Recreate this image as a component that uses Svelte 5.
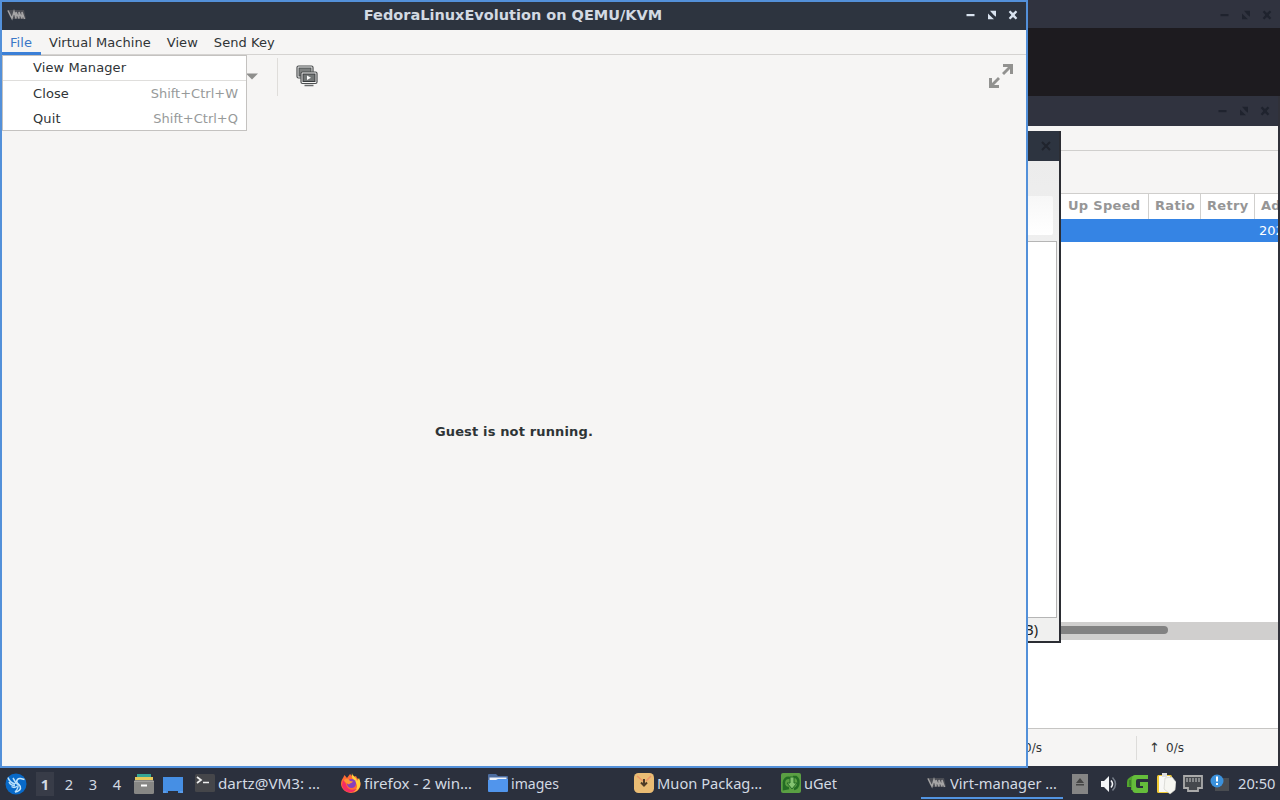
<script lang="ts">
	const menus = ['File', 'Virtual Machine', 'View', 'Send Key'];
	const columns = [
		{ label: 'Up Speed', width: 88 },
		{ label: 'Ratio', width: 52 },
		{ label: 'Retry', width: 54 },
		{ label: 'Added On', width: 90 }
	];
	const desktops = [1, 2, 3, 4];
	const tasks = [
		{ icon: 'terminal', label: 'dartz@VM3: …', width: 102 },
		{ icon: 'firefox', label: 'firefox - 2 win…', width: 108 },
		{ icon: 'folder', label: 'images', width: 48 },
		{ icon: 'muon', label: 'Muon Packag…', width: 105 },
		{ icon: 'uget', label: 'uGet', width: 33 },
		{ icon: 'virt', label: 'Virt-manager …', width: 107, active: true }
	];
</script>

{#snippet buttons()}
	<svg class="buttons" width="54" height="12" viewBox="0 0 54 12" fill="currentColor">
		<path d="M2.500 5h8v2.200h-8z" />
		<path d="M26 1.800h6v6l-2-1.600-2.500-2.600zM24 4.500l2.500 2.500L30 10.300h-6z" />
		<path d="M44.700 3l1.600-1.600 2.700 2.700 2.700-2.700L53.300 3l-2.700 3 2.700 3-1.600 1.600L49 7.900l-2.700 2.700L44.700 9l2.700-3z" />
	</svg>
{/snippet}

{#snippet vmLogo()}
	<svg width="20" height="12" viewBox="0 0 20 12">
		<path d="M0 1h17l2 9H6L3 8z" fill="#4b4d54" />
		<path d="M1 1.500l4 8 2-7 2 7V3l3 6.500V3l3 6.500V3l2.500 7" fill="none" stroke="#a5a4a5" stroke-width="1.400" />
	</svg>
{/snippet}

<div class="desktop">
	<section class="window console">
		<header>{@render buttons()}</header>
	</section>

	<section class="window downloads">
		<header>{@render buttons()}</header>
		<div class="downloads-menu"></div>
		<div class="downloads-tools"></div>
		<div class="columns">
			{#each columns as column}
				<span style:width="{column.width}px">{column.label}</span>
			{/each}
		</div>
		<div class="selected-row"><span>2021</span></div>
		<div class="rows"></div>
		<div class="scrollbar"><i></i></div>
		<div class="summary"></div>
		<footer><span class="down">↓ 0/s</span><span class="up"><b>↑</b>0/s</span></footer>
	</section>

	<section class="window dialog">
		<header>
			<svg width="10" height="10" viewBox="0 0 10 10"><path d="M1 1l8 8M9 1L1 9" stroke="#20242d" stroke-width="2" /></svg>
		</header>
		<div class="dialog-tools"><i></i></div>
		<div class="dialog-list"></div>
		<footer>GiB)</footer>
	</section>

	<section class="window viewer">
		<header>
			<span class="logo">{@render vmLogo()}</span>
			<h1>FedoraLinuxEvolution on QEMU/KVM</h1>
			{@render buttons()}
		</header>
		<nav>
			{#each menus as menu, i}
				<span class:open={i === 0}>{menu}</span>
			{/each}
		</nav>
		<div class="toolbar">
			<svg class="arrow" width="12" height="7" viewBox="0 0 12 7"><path d="M0 .5h12L6 6.500z" fill="#8e8e8c" /></svg>
			<span class="separator"></span>
			<svg class="snapshots" width="22" height="22" viewBox="0 0 22 22">
				<rect x="1" y="1" width="16" height="12" rx="1.500" fill="#f5f5f4" stroke="#4b4e4f" stroke-width="1.200" />
				<rect x="3" y="3" width="12" height="8" fill="#7d8080" stroke="#4b4e4f" />
				<rect x="5" y="7" width="16" height="11.500" rx="1.500" fill="#f5f5f4" stroke="#4b4e4f" stroke-width="1.200" />
				<rect x="7" y="9" width="12" height="7.500" fill="#737777" stroke="#383b3d" />
				<path d="M11 10.500v4.500l4-2.200z" fill="#fff" />
				<path d="M8.500 20.500h9" fill="none" stroke="#686b6c" stroke-width="1.500" />
			</svg>
			<svg class="fullscreen" width="24" height="24" viewBox="0 0 24 24">
				<path d="M14 0h10v10h-3V5l-6 6-2-2 6-6h-5zM0 14h3v5l6-6 2 2-6 6h5v3H0z" fill="#929290" />
			</svg>
		</div>
		<main>Guest is not running.</main>

		<div class="menu">
			<div class="item">View Manager</div>
			<hr />
			<div class="item">Close <kbd>Shift+Ctrl+W</kbd></div>
			<div class="item">Quit <kbd>Shift+Ctrl+Q</kbd></div>
		</div>
	</section>

	<div class="panel">
		<svg class="start" width="22" height="22" viewBox="0 0 22 22">
			<circle cx="11" cy="11" r="10.500" fill="#0869c8" />
			<path d="M3 4.500C4 8 6 10 10 11M4 9c1 2.500 3 3.500 6 3.500M6.500 13.500c2 1.500 4 1 6-.5M8 5l3 5" fill="none" stroke="#b9e0fb" stroke-width="1.500" />
			<path d="M19.500 6.500l-4-1c-3-.3-4.500 2-3.500 4s4.500 3 3.500 6c-.7 2-2.500 3-5.500 3.500" fill="none" stroke="#c8e8fc" stroke-width="1.600" />
			<path d="M10 10l3 1.500c.5 3-.5 5-3 7.500" fill="none" stroke="#b9e0fb" stroke-width="1.200" />
		</svg>
		<div class="desktops">
			{#each desktops as number}
				<span class:current={number === 1}>{number}</span>
			{/each}
		</div>
		<div class="launchers">
			<svg width="22" height="22" viewBox="0 0 22 22">
				<path d="M4 1h14v4H4z" fill="#36a695" />
				<path d="M2 4h18v5H2z" fill="#e7c95a" />
				<rect x="1" y="7" width="20" height="14" rx="1.500" fill="#878785" />
				<path d="M1 8.500h20" stroke="#a2a2a0" />
				<path d="M8 12.500h6" stroke="#fff" stroke-width="2" />
			</svg>
			<svg width="22" height="22" viewBox="0 0 22 22">
				<path d="M1 4h20v16h-5v-2H6v2H1z" fill="#468fe4" />
				<path d="M1 19h3M18 19h3" stroke="#71a9ec" />
			</svg>
		</div>
		<div class="tasks">
			{#each tasks as task}
				<div class="task" class:active={task.active}>
					{#if task.icon === 'virt'}
						{@render vmLogo()}
					{:else}
						<svg width="20" height="20" viewBox="0 0 20 20">
							{#if task.icon === 'terminal'}
								<rect y="1" width="20" height="18" rx="1.500" fill="#45464a" />
								<path d="M2 4l4 3-4 3M8 9.500h6" fill="none" stroke="#eee" stroke-width="1.700" />
							{:else if task.icon === 'firefox'}
								<path d="M2 5l1.500-3L6 5l3-4 3 3 3-1 1 2c2 1.500 4 4 3.500 7-.6 5-5 8-9.500 8S0 16 0 11c0-2.500.8-4.500 2-6z" fill="#ff6b35" />
								<path d="M11 0c0 3 5 4 5 8l2-3c3 6 1 13-6 14 4-2 5-6 3-9-2-3-5-4-4-10z" fill="#ffd03b" />
								<path d="M1 12c1 7 9 10 15 4-6 2-10 0-11-5L2 7z" fill="#f62c64" />
								<circle cx="10.500" cy="10.500" r="4.500" fill="#8640bd" />
								<path d="M3 7c3-2 5-1 6 1l3 .5c-1 2-3 1-4 3-2-1-4-2-5-4.500z" fill="#ff9834" />
							{:else if task.icon === 'folder'}
								<path d="M0 2q0-1 1-1h7l2 2h9q1 0 1 1v8H0z" fill="#4d6da0" />
								<path d="M1.500 4.500h17V8h-17z" fill="#f0f5fc" />
								<path d="M0 7h8l2-1h10v12q0 1-1 1H1q-1 0-1-1z" fill="#5195ec" />
							{:else if task.icon === 'muon'}
								<rect width="20" height="20" rx="4.500" fill="#eabc74" />
								<path d="M3 3l6 5M17 3l-5 5" stroke="#ed9565" stroke-width="1.500" />
								<path d="M10 6v6M7 9.500l3 3 3-3" fill="none" stroke="#4f3c26" stroke-width="2" />
							{:else}
								<rect width="20" height="20" rx="2" fill="#5a9f43" />
								<path d="M9 5C1 3 1 16 8 15l-5 1V11M12 4h3c4 3 3 11-2 12" fill="none" stroke="#246d24" stroke-width="2.500" />
								<path d="M9 4h4v6h3l-5 6-5-6h3z" fill="#84c471" stroke="#276d27" />
							{/if}
						</svg>
					{/if}
					<svg class="label" width={task.width + 2} height="24">
						<text x="0" y="18" textLength={task.width} lengthAdjust="spacingAndGlyphs">{task.label}</text>
					</svg>
				</div>
			{/each}
		</div>
		<div class="tray">
			<svg width="16" height="20" viewBox="0 0 16 20">
				<path d="M0 0h16v20H0z" fill="#858585" />
				<path d="M4 9l4-5 4 5zM4 10h8v1.500H4z" fill="#454545" />
			</svg>
			<svg class="volume" width="18" height="18" viewBox="0 0 18 18">
				<path d="M1 6h3l5-5v16l-5-5H1z" fill="#f2f4f7" />
				<path d="M11 5.500q3 3.500 0 7" fill="none" stroke="#f2f4f7" stroke-width="1.600" />
				<path d="M12.500 2.500q6 6.500 0 13" fill="none" stroke="#777e8a" stroke-width="1.500" />
			</svg>
			<svg width="23" height="20" viewBox="0 0 23 20">
				<path d="M3 4q-2 1-2 4v5h4v3h4V2H6z" fill="#52a42e" />
				<path d="M4 6v6M7 4v11" stroke="#2d642a" />
				<path d="M9 1h13v4H12q-2 0-2 2v5q0 2 2 2h5v-2h-3V8h8v9q0 2-3 2H10q-4 0-4-5V5q0-4 3-4z" fill="#65bd3b" />
			</svg>
			<svg width="20" height="22" viewBox="0 0 20 22">
				<rect x="1" y="2" width="15" height="18" rx="1.500" fill="#f0ca34" />
				<path d="M3 3h11v16H3z" fill="#f8f8f6" />
				<path d="M6 0h5v4H6z" fill="#ddd" />
				<path d="M9 5l7-1 4 5-1 8-5 4-6-5z" fill="#f6f6f1" stroke="#c9c9c4" stroke-width=".6" />
			</svg>
			<svg width="20" height="18" viewBox="0 0 20 18">
				<path d="M1 1h18v12h-4v3H5v-3H1z" fill="#45484d" stroke="#aaa" stroke-width="1.800" />
				<path d="M4 3v4M7 3v4M10 3v4M13 3v4M16 3v4" stroke="#c9c9c9" />
			</svg>
			<svg width="20" height="20" viewBox="0 0 20 20">
				<path d="M5 4h14v13H5z" fill="#494c51" />
				<circle cx="7" cy="7" r="6.500" fill="#3b91dc" />
				<path d="M7 2.500v5M7 9v2" stroke="#fff" stroke-width="2" />
			</svg>
		</div>
		<svg class="label clock" width="39" height="24">
			<text x="0" y="17" textLength="37.500" lengthAdjust="spacingAndGlyphs">20:50</text>
		</svg>
	</div>
</div>

<style>
	:global(body) {
		overflow: hidden;
	}

	.desktop {
		position: relative;
		width: 1280px;
		height: 800px;
		overflow: hidden;
		background: #1d1b1f;
		font: 13px 'DejaVu Sans', sans-serif;
		color: #303436;
	}

	.desktop * {
		box-sizing: border-box;
	}

	svg {
		display: block;
		flex: none;
	}

	.window {
		position: absolute;
		display: flex;
		flex-direction: column;
		overflow: hidden;
		white-space: nowrap;
	}

	.window header {
		display: flex;
		align-items: center;
		justify-content: flex-end;
		flex: none;
		background: #30333f;
		color: #1f232e;
	}

	.console {
		inset: 0 0 704px 900px;
	}

	.console header {
		height: 28px;
		padding: 2px 8px 0 0;
	}

	.downloads {
		left: 900px;
		top: 96px;
		width: 380px;
		height: 670px;
		border-right: 2px solid #303139;
		background: #fff;
	}

	.downloads header {
		height: 30px;
		padding-right: 8px;
	}

	.downloads-menu {
		height: 25px;
		background: #f6f5f4;
		border-bottom: 1px solid #d0cfcd;
	}

	.downloads-tools {
		height: 42px;
		background: #f6f5f4;
	}

	.columns {
		display: flex;
		height: 26px;
		padding-left: 161px;
		border-top: 1px solid #cfcecc;
		font-weight: bold;
		letter-spacing: 0.3px;
		color: #969696;
	}

	.columns span {
		flex: none;
		padding: 4px 0 0 6px;
		border-right: 1px solid #d1d0ce;
		overflow: hidden;
	}

	.columns span:first-child {
		padding-left: 7px;
	}

	.selected-row {
		height: 23px;
		padding: 4px 0 0 359px;
		background: #3584e4;
		color: #fff;
	}

	.rows {
		height: 380px;
	}

	.scrollbar {
		height: 18px;
		padding-top: 4px;
		background: #d0cfce;
	}

	.scrollbar i {
		display: block;
		width: 268px;
		height: 8px;
		border-radius: 4px;
		background: #828282;
	}

	.summary {
		height: 88px;
	}

	.downloads footer {
		display: flex;
		flex: 1;
		padding: 7px 0 6px;
		border-top: 1px solid #c6c5c3;
		background: #f6f5f4;
		font-size: 12px;
		line-height: 24px;
	}

	.down {
		width: 237px;
		padding-right: 94px;
		border-right: 1px solid #dddcda;
		text-align: right;
	}

	.up {
		padding-left: 12px;
	}

	.up b {
		display: inline-block;
		width: 17px;
		font-size: 13px;
		font-weight: normal;
	}

	.dialog {
		left: 900px;
		top: 131px;
		width: 161px;
		height: 512px;
		border: solid #2b2d33;
		border-width: 0 2px 2px 0;
		background: #f0f0ef;
	}

	.dialog header {
		height: 30px;
		padding-right: 8px;
		background: #2d3440;
	}

	.dialog-tools {
		height: 80px;
		padding: 35px 6px 6px 0;
		background: linear-gradient(#ececec, #efefef);
	}

	.dialog-tools i {
		display: block;
		height: 39px;
		border-radius: 2px;
		background: linear-gradient(#f7f7f7, #fff);
	}

	.dialog-list {
		height: 377px;
		margin-right: 2px;
		border: 1px solid #b5b5b5;
		background: #fff;
	}

	.dialog footer {
		padding: 0 21px 0 0;
		font: 14.5px/22px 'Noto Sans', sans-serif;
		color: #222;
		text-align: right;
	}

	.viewer {
		z-index: 1;
		left: 0;
		top: 0;
		width: 1028px;
		height: 768px;
		border: 2px solid #5390d9;
		background: #f6f5f4;
	}

	.viewer header {
		height: 28px;
		padding: 0 8px 2px 5px;
		background: #2d343f;
		color: #d9e3ef;
	}

	.viewer h1 {
		flex: 1;
		margin: 0 0 0 35px;
		font-size: 14.5px;
		line-height: 26px;
		text-align: center;
		color: #d3dae3;
	}

	nav {
		display: flex;
		height: 25px;
		border-bottom: 1px solid #d5d3d1;
		letter-spacing: 0.05px;
		line-height: 26px;
	}

	nav span {
		padding: 0 8px;
	}

	nav .open {
		width: 39px;
		height: 25px;
		color: #3b78c7;
		border-bottom: 3px solid #3b80d7;
	}

	.toolbar {
		display: flex;
		align-items: center;
		height: 42px;
		padding: 0 13px 0 244px;
	}

	.separator {
		width: 1px;
		height: 38px;
		margin: 2px 18px 0 19px;
		background: #dfddda;
	}

	.fullscreen {
		margin-left: auto;
	}

	main {
		display: grid;
		place-items: center;
		flex: 1;
		font-weight: bold;
		letter-spacing: 0.15px;
		color: #2e3436;
	}

	.menu {
		position: absolute;
		left: 0;
		top: 53px;
		width: 245px;
		height: 76px;
		background: #fff;
		border: 1px solid #c4c2c0;
	}

	.item {
		display: flex;
		justify-content: space-between;
		height: 25px;
		padding: 0 8px 0 30px;
		letter-spacing: 0.1px;
		line-height: 25px;
	}

	.item:first-child {
		height: 24px;
		line-height: 24px;
	}

	.menu hr {
		height: 1px;
		margin: 0;
		border: 0;
		background: #dfdedc;
	}

	kbd {
		font: inherit;
		letter-spacing: 0;
		color: #979a9a;
	}

	.panel {
		position: absolute;
		inset: 768px 0 0;
		display: flex;
		align-items: center;
		background: #2b303d;
		box-shadow: 0 -2px #2b303d;
		color: #d3dae3;
		font: 14.67px 'Noto Sans', sans-serif;
	}

	.start {
		margin-left: 5px;
	}

	.desktops {
		display: flex;
		margin-left: 6px;
	}

	.desktops span {
		width: 24px;
		height: 24px;
		line-height: 24px;
		text-align: center;
	}

	.desktops .current {
		background: linear-gradient(90deg, transparent 3px, #383c48 3px 21px, transparent 21px);
		font-weight: bold;
	}

	.launchers {
		display: flex;
		gap: 7px;
		margin-left: 4px;
	}

	.tasks {
		display: grid;
		grid-template-columns: repeat(6, 146.4px);
		align-self: stretch;
		margin-left: 5px;
		width: 875px;
	}

	.task {
		display: flex;
		align-items: center;
		gap: 3px;
		width: 142px;
		margin-bottom: 1px;
		padding: 1px 0 0 6px;
		border-bottom: 2px solid transparent;
	}

	.task.active {
		border-color: #5294e2;
	}

	.label {
		fill: #d3dae3;
	}

	.tray {
		display: flex;
		align-items: center;
		gap: 7px;
		margin-left: 7.500px;
	}

	.volume {
		margin: 0 1px 0 5px;
	}

	.clock {
		margin-left: auto;
		margin-right: 3px;
	}
</style>
